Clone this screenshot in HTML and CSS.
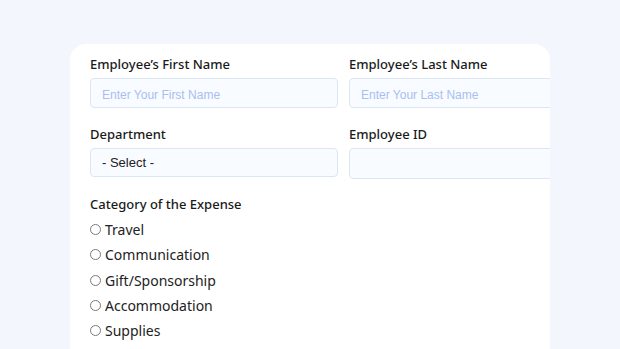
FILE: index.html
```html
<!DOCTYPE html>
<html lang="en">

<head>
    <meta charset="UTF-8">
    <meta name="viewport" content="width=device-width, initial-scale=1.0">
    <title>Expense Form</title>
    <link rel="stylesheet" href="styles.css">
</head>

<body>
    <div class="card">
        <div class="grid">
            <div class="field">
                <label class="label">Employee’s First Name</label>
                <input class="input" type="text" placeholder="Enter Your First Name">
            </div>
            <div class="field">
                <label class="label">Employee’s Last Name</label>
                <input class="input" type="text" placeholder="Enter Your Last Name">
            </div>
            <div class="field">
                <label class="label">Department</label>
                <div class="input select">- Select -</div>
            </div>
            <div class="field">
                <label class="label">Employee ID</label>
                <input class="input tall" type="text">
            </div>
        </div>

        <div class="group">
            <div class="label">Category of the Expense</div>
            <ul class="radios">
                <li><span class="dot"></span>Travel</li>
                <li><span class="dot"></span>Communication</li>
                <li><span class="dot"></span>Gift/Sponsorship</li>
                <li><span class="dot"></span>Accommodation</li>
                <li><span class="dot"></span>Supplies</li>
            </ul>
        </div>
    </div>
</body>

</html>
```

FILE: styles.css
```css
html,
body {
    margin: 0;
    padding: 0;
}

body {
    background: #f3f6fd;
    height: 349px;
    overflow: hidden;
    padding-top: 44px;
    box-sizing: border-box;
    font-family: "Noto Sans", "Liberation Sans", sans-serif;
}

.card {
    margin-left: 70px;
    width: 480px;
    height: 320px;
    background: #fff;
    border-radius: 16px 16px 0 0;
    padding: 12px 0 0 20px;
    box-sizing: border-box;
    overflow: hidden;
}

.grid {
    display: grid;
    grid-template-columns: 248px 248px;
    column-gap: 11px;
    row-gap: 18px;
}

.field {
    display: flex;
    flex-direction: column;
}

.label {
    font-size: 13px;
    line-height: 16px;
    font-weight: 500;
    color: #1a1a1a;
    margin-bottom: 6px;
}

.input {
    height: 30px;
    box-sizing: border-box;
    background: #f8fbff;
    border: 1px solid #dbe6f4;
    border-radius: 4px;
    padding: 3px 11px 0;
    font-family: "Liberation Sans", Arial, sans-serif;
    font-size: 12px;
    color: #222;
    outline: none;
}

.input::placeholder {
    color: #a8bff0;
}

.select {
    height: 29px;
    display: flex;
    align-items: center;
    padding-top: 0;
    font-size: 13px;
    color: #222;
}

.tall {
    height: 31px;
}

.group {
    margin-top: 17px;
}

.group .label {
    margin-bottom: 5px;
}

.radios {
    list-style: none;
    margin: 0;
    padding: 0;
}

.radios li {
    display: flex;
    align-items: center;
    height: 25.3px;
    font-size: 14px;
    color: #222;
}

.dot {
    width: 11px;
    height: 11px;
    border: 1px solid #7a7a7a;
    border-radius: 50%;
    box-sizing: border-box;
    margin-right: 4px;
}
```
